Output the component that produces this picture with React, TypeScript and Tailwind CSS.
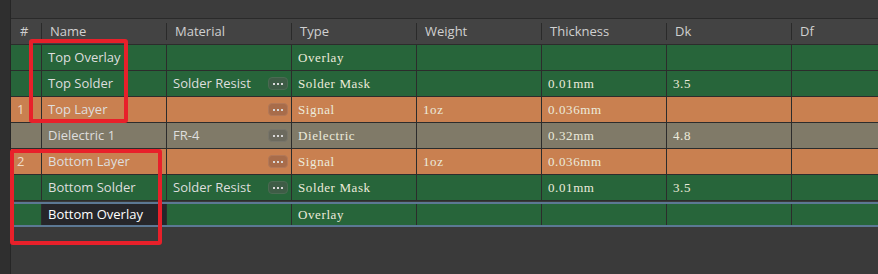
import React from "react";

type Layer = {
  num: string;
  name: string;
  material: string;
  type: string;
  weight: string;
  thickness: string;
  dk: string;
  df: string;
  kind: "mask" | "copper" | "core";
  editable: boolean; // shows the "..." material picker
};

const layers: Layer[] = [
  { num: "", name: "Top Overlay", material: "", type: "Overlay", weight: "", thickness: "", dk: "", df: "", kind: "mask", editable: false },
  { num: "", name: "Top Solder", material: "Solder Resist", type: "Solder Mask", weight: "", thickness: "0.01mm", dk: "3.5", df: "", kind: "mask", editable: true },
  { num: "1", name: "Top Layer", material: "", type: "Signal", weight: "1oz", thickness: "0.036mm", dk: "", df: "", kind: "copper", editable: true },
  { num: "", name: "Dielectric 1", material: "FR-4", type: "Dielectric", weight: "", thickness: "0.32mm", dk: "4.8", df: "", kind: "core", editable: true },
  { num: "2", name: "Bottom Layer", material: "", type: "Signal", weight: "1oz", thickness: "0.036mm", dk: "", df: "", kind: "copper", editable: true },
  { num: "", name: "Bottom Solder", material: "Solder Resist", type: "Solder Mask", weight: "", thickness: "0.01mm", dk: "3.5", df: "", kind: "mask", editable: true },
];

const rowBg = {
  mask: "bg-[#27653a]",
  copper: "bg-[#c98050]",
  core: "bg-[#807a68]",
};

const btnBg = {
  mask: "bg-[#3e5c46] border-[#4a6a52]",
  copper: "bg-[#a86c4a] border-[#b27858]",
  core: "bg-[#6c6a5e] border-[#78756a]",
};

const sans = "font-['Open_Sans','Noto_Sans',sans-serif]";
const serif = "font-['Liberation_Serif',serif] tracking-[0.6px]";

const headers = ["Name", "Material", "Type", "Weight", "Thickness", "Dk", "Df"];

const Cell = ({ children, className = "" }: { children?: React.ReactNode; className?: string }) => (
  <div className={`flex items-center border-r border-[#2c2c2c] px-[6px] overflow-hidden whitespace-nowrap ${className}`}>
    {children}
  </div>
);

const DotsButton = ({ kind }: { kind: Layer["kind"] }) => (
  <span
    className={`ml-auto mr-[-3px] flex h-[13px] w-[20px] shrink-0 items-center justify-center gap-[2px] rounded-[4px] border ${btnBg[kind]}`}>
    <span className="h-[2px] w-[2px] bg-[#d8d8d8]" />
    <span className="h-[2px] w-[2px] bg-[#d8d8d8]" />
    <span className="h-[2px] w-[2px] bg-[#d8d8d8]" />
  </span>
);

const cols = "grid grid-cols-[31px_repeat(7,125px)]";
const headSep =
  "border-r border-[#2c2c2c] [border-image:linear-gradient(transparent_5px,#2a2a2a_5px,#2a2a2a_20px,transparent_20px)_1]";

const App = () => {
  return (
    <div className="relative flex h-[274px] w-[878px] overflow-hidden bg-[#3a3a3a]">
      {/* left dock strip */}
      <div className="w-[11px] shrink-0 border-r border-[#262626] bg-[#2f2f2f]" />

      <div className="flex min-w-0 flex-1 flex-col">
        {/* toolbar area */}
        <div className="h-[19px] shrink-0 border-b border-[#2a2a2a] bg-[#3c3c3c]" />

        {/* column headers */}
        <div className={`${cols} h-[26px] shrink-0 border-b border-[#2c2c2c] bg-[#434343] text-[13px] text-[#d0d0d0] ${sans}`}>
          <div className={`flex items-center pl-[9px] ${headSep}`}>#</div>
          {headers.map((h) => (
            <div key={h} className={`flex items-center pl-[8px] ${headSep}`}>
              {h}
            </div>
          ))}
        </div>

        {/* stack rows */}
        {layers.map((l) => (
          <div key={l.name} className={`${cols} h-[26px] shrink-0 border-b border-[#2c2c2c] ${rowBg[l.kind]}`}>
            <Cell className={`text-[13px] text-[#f0dcc8] ${sans}`}>{l.num}</Cell>
            <Cell className={`text-[13px] text-[#dedede] ${sans}`}>{l.name}</Cell>
            <Cell className={`text-[13px] text-[#dedede] ${sans}`}>
              {l.material}
              {l.editable && <DotsButton kind={l.kind} />}
            </Cell>
            <Cell className={`text-[13px] text-[#ecebdc] ${serif}`}>{l.type}</Cell>
            <Cell className={`text-[13px] text-[#ecebdc] ${serif}`}>{l.weight}</Cell>
            <Cell className={`text-[13px] text-[#ecebdc] ${serif}`}>{l.thickness}</Cell>
            <Cell className={`text-[13px] text-[#ecebdc] ${serif}`}>{l.dk}</Cell>
            <Cell>{l.df}</Cell>
          </div>
        ))}

        {/* selected row, name in edit mode */}
        <div className={`${cols} mt-[1px] h-[25px] shrink-0 border-y-2 border-[#5c7894] bg-[#27653a]`}>
          <Cell />
          <div className={`flex items-center border-r border-[#2c2c2c] bg-[#26262a] px-[6px] text-[13px] text-white ${sans}`}>
            Bottom Overlay
          </div>
          <Cell />
          <Cell className={`text-[13px] text-[#ecebdc] ${serif}`}>Overlay</Cell>
          <Cell />
          <Cell />
          <Cell />
          <Cell />
        </div>
      </div>

      {/* red callout boxes */}
      <div className="pointer-events-none absolute left-[29px] top-[39px] h-[84px] w-[99px] rounded-[3px] border-[4px] border-[#e8202a]" />
      <div className="pointer-events-none absolute left-[10px] top-[149px] h-[96px] w-[152px] rounded-[3px] border-[4px] border-[#e8202a]" />
    </div>
  );
};

export default App;
